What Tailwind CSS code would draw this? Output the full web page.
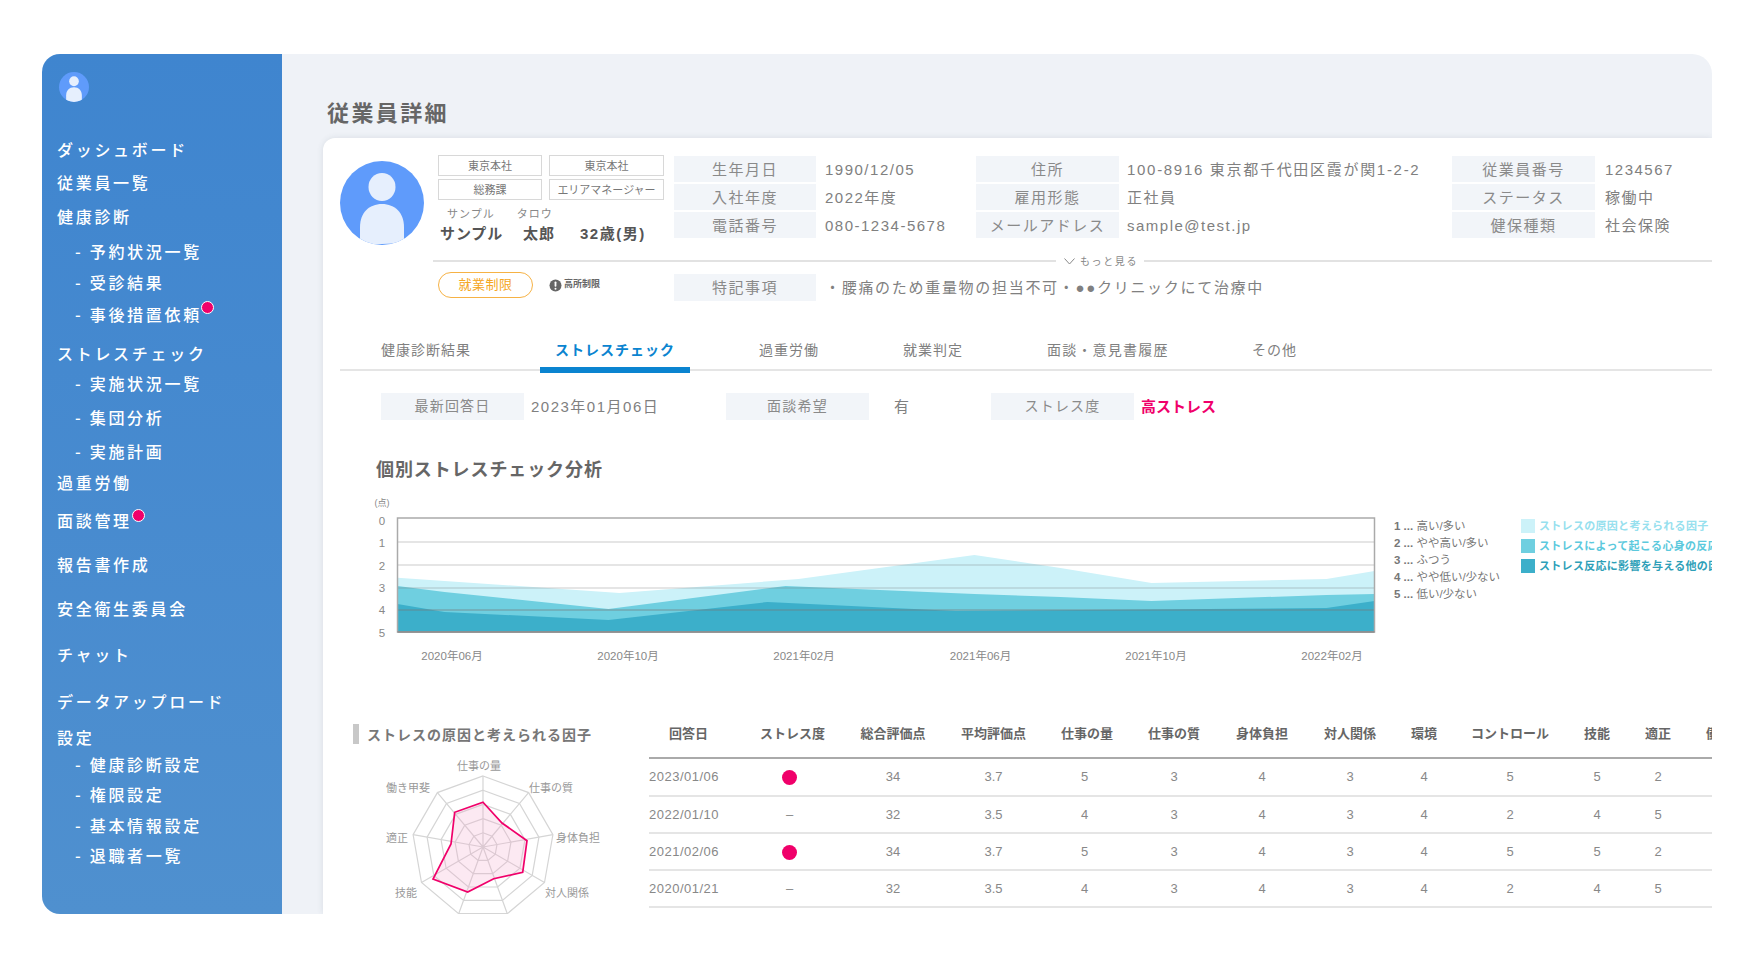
<!DOCTYPE html>
<html lang="ja">
<head>
<meta charset="utf-8">
<title>従業員詳細</title>
<script src="https://cdn.jsdelivr.net/npm/@tailwindcss/browser@4"></script>
</head>
<body class="bg-white overflow-hidden [font-family:'Liberation_Sans','Noto_Sans_CJK_JP',sans-serif]">
<div class="pt-[54px] pl-[42px] h-[964px] w-[1742px]">
  <div class="flex w-[1670px] h-[860px] overflow-hidden rounded-l-[18px] rounded-tr-[20px]">
    <!-- Sidebar -->
    <aside class="w-[240px] shrink-0 bg-gradient-to-b from-[#3f85cf] to-[#4f90cf] pt-[18px] pl-[15px] text-white font-medium text-[16px] leading-[20px] tracking-[2.7px] [font-family:'Noto_Sans_CJK_JP',sans-serif]">
      <svg class="ml-[2px] w-[30px] h-[30px]" viewBox="0 0 84 84">
        <defs><clipPath id="a1"><circle cx="42" cy="42" r="42"/></clipPath></defs>
        <circle cx="42" cy="42" r="42" fill="#5f9bfb"/>
        <g clip-path="url(#a1)" fill="#e6effd"><ellipse cx="42" cy="26" rx="13.5" ry="14"/><path d="M20 84V66C20 52 29 43 42 43C55 43 64 52 64 66V84Z"/></g>
      </svg>
      <nav class="mt-[37px]">
        <div>ダッシュボード</div>
        <div class="mt-[13px]">従業員一覧</div>
        <div class="mt-[14px]">健康診断</div>
        <div class="mt-[15px] ml-[18px]">- 予約状況一覧</div>
        <div class="mt-[11px] ml-[18px]">- 受診結果</div>
        <div class="mt-[12px] ml-[18px]"><span class="relative">- 事後措置依頼<i class="absolute left-full top-[-1px] ml-[-1px] w-[13px] h-[13px] rounded-full bg-[#f0006a] border border-white"></i></span></div>
        <div class="mt-[19px]">ストレスチェック</div>
        <div class="mt-[10px] ml-[18px]">- 実施状況一覧</div>
        <div class="mt-[14px] ml-[18px]">- 集団分析</div>
        <div class="mt-[14px] ml-[18px]">- 実施計画</div>
        <div class="mt-[11px]">過重労働</div>
        <div class="mt-[18px]"><span class="relative">面談管理<i class="absolute left-full top-[1px] w-[13px] h-[13px] rounded-full bg-[#f0006a] border border-white"></i></span></div>
        <div class="mt-[24px]">報告書作成</div>
        <div class="mt-[24px]">安全衛生委員会</div>
        <div class="mt-[26px]">チャット</div>
        <div class="mt-[27px]">データアップロード</div>
        <div class="mt-[16px]">設定</div>
        <div class="mt-[7px] ml-[18px]">- 健康診断設定</div>
        <div class="mt-[10px] ml-[18px]">- 権限設定</div>
        <div class="mt-[11px] ml-[18px]">- 基本情報設定</div>
        <div class="mt-[10px] ml-[18px]">- 退職者一覧</div>
      </nav>
    </aside>

    <!-- Main -->
    <main class="flex-1 min-w-0 flex flex-col bg-[#eff2f7] pl-[41px] pt-[42px]">
      <h1 class="ml-[4px] h-[30px] leading-[30px] text-[22px] tracking-[2.4px] font-bold text-[#666] [font-family:'Noto_Sans_CJK_JP',sans-serif]">従業員詳細</h1>
      <section class="mt-[12px] flex-1 min-h-0 overflow-hidden bg-white rounded-tl-[12px] shadow-[0_0_6px_rgba(60,70,90,0.12)]">
        <!-- Profile header -->
        <div class="flex pl-[17px] pt-[17px]">
          <svg class="mt-[6px] w-[84px] h-[84px] shrink-0" viewBox="0 0 84 84">
            <defs><clipPath id="a2"><circle cx="42" cy="42" r="42"/></clipPath></defs>
            <circle cx="42" cy="42" r="42" fill="#5f9bfb"/>
            <g clip-path="url(#a2)" fill="#e6effd"><ellipse cx="42" cy="26" rx="13.5" ry="14"/><path d="M20 84V66C20 52 29 43 42 43C55 43 64 52 64 66V82Z"/></g>
          </svg>
          <div class="ml-[14px] w-[226px] shrink-0">
            <div class="grid grid-cols-[104px_115px] gap-x-[7px] gap-y-[3px] text-[11px] text-[#777] text-center">
              <div class="h-[21px] leading-[20px] border border-[#d8d8d8]">東京本社</div>
              <div class="h-[21px] leading-[20px] border border-[#d8d8d8]">東京本社</div>
              <div class="h-[21px] leading-[20px] border border-[#d8d8d8]">総務課</div>
              <div class="h-[21px] leading-[20px] border border-[#d8d8d8]">エリアマネージャー</div>
            </div>
            <div class="mt-[7px] ml-[9px] h-[14px] leading-[14px] text-[11px] tracking-[1px] text-[#888]"><span>サンプル</span><span class="ml-[22px]">タロウ</span></div>
            <div class="mt-[2px] ml-[2px] h-[22px] leading-[22px] text-[15px] font-bold tracking-[0.9px] text-[#555] flex"><span class="w-[83px]">サンプル</span><span class="w-[57px]">太郎</span><span class="tracking-[1.5px]">32歳(男)</span></div>
          </div>
          <div class="ml-[10px] mt-[1px] flex-1 grid grid-cols-[142px_160px_143px_333px_143px_1fr] auto-rows-[26px] gap-y-[2px] text-[15px] leading-[27px] tracking-[1.5px] text-[#808080]">
            <div class="bg-[#f2f5f9] text-center text-[#8a8a8a]">生年月日</div><div class="pl-[9px]">1990/12/05</div>
            <div class="bg-[#f2f5f9] text-center text-[#8a8a8a]">住所</div><div class="pl-[8px] whitespace-nowrap tracking-[1.7px]">100-8916 東京都千代田区霞が関1-2-2</div>
            <div class="bg-[#f2f5f9] text-center text-[#8a8a8a]">従業員番号</div><div class="pl-[10px]">1234567</div>
            <div class="bg-[#f2f5f9] text-center text-[#8a8a8a]">入社年度</div><div class="pl-[9px]">2022年度</div>
            <div class="bg-[#f2f5f9] text-center text-[#8a8a8a]">雇用形態</div><div class="pl-[8px]">正社員</div>
            <div class="bg-[#f2f5f9] text-center text-[#8a8a8a]">ステータス</div><div class="pl-[10px]">稼働中</div>
            <div class="bg-[#f2f5f9] text-center text-[#8a8a8a]">電話番号</div><div class="pl-[9px]">080-1234-5678</div>
            <div class="bg-[#f2f5f9] text-center text-[#8a8a8a]">メールアドレス</div><div class="pl-[8px]">sample@test.jp</div>
            <div class="bg-[#f2f5f9] text-center text-[#8a8a8a]">健保種類</div><div class="pl-[10px]">社会保険</div>
          </div>
        </div>

        <!-- More divider -->
        <div class="mt-[9px] ml-[110px] flex items-center h-[14px]">
          <div class="w-[623px] h-[2px] bg-[#e2e2e2]"></div>
          <svg class="ml-[8px] w-[11px] h-[7px]" viewBox="0 0 11 7"><polyline points="0.5,0.5 5.5,6 10.5,0.5" fill="none" stroke="#888" stroke-width="1"/></svg>
          <span class="ml-[5px] text-[10px] tracking-[1.6px] text-[#888] whitespace-nowrap">もっと見る</span>
          <div class="ml-[6px] flex-1 h-[2px] bg-[#e2e2e2]"></div>
        </div>

        <!-- Restriction and notes -->
        <div class="mt-[4px] ml-[115px] flex items-start">
          <div class="w-[236px] shrink-0 flex items-center">
            <span class="w-[95px] h-[26px] leading-[24px] text-center rounded-full border border-[#f6b245] text-[13px] tracking-[0.5px] text-[#f5a623]">就業制限</span>
            <svg class="ml-[16px] w-[13px] h-[13px]" viewBox="0 0 13 13"><circle cx="6.5" cy="6.5" r="6" fill="#666"/><rect x="5.6" y="2.4" width="1.8" height="5.4" rx="0.8" fill="#fff"/><circle cx="6.5" cy="9.8" r="1" fill="#fff"/></svg>
            <span class="ml-[2px] text-[9px] font-bold text-[#666] whitespace-nowrap">高所制限</span>
          </div>
          <div class="mt-[2px] w-[142px] h-[27px] leading-[27px] bg-[#f2f5f9] text-center text-[15px] tracking-[1.5px] text-[#8a8a8a]">特記事項</div>
          <div class="ml-[9px] mt-[2px] leading-[27px] text-[15px] tracking-[1.7px] text-[#808080]">・腰痛のため重量物の担当不可・●●クリニックにて治療中</div>
        </div>

        <!-- Tabs -->
        <div class="mt-[34px] ml-[17px] h-[36px] flex items-start border-b-2 border-[#e5e5e5] text-[14px] tracking-[1px] leading-[30px] text-[#808080]">
          <span class="ml-[41px] w-[90px] whitespace-nowrap">健康診断結果</span>
          <span class="ml-[69px] w-[150px] h-[38px] text-center font-bold text-[#0a84d0] border-b-[6px] border-[#0a84d0] whitespace-nowrap">ストレスチェック</span>
          <span class="ml-[69px] w-[60px] whitespace-nowrap">過重労働</span>
          <span class="ml-[84px] w-[60px] whitespace-nowrap">就業判定</span>
          <span class="ml-[84px] w-[122px] whitespace-nowrap tracking-[1.2px]">面談・意見書履歴</span>
          <span class="ml-[83px] whitespace-nowrap">その他</span>
        </div>

        <!-- Stress summary -->
        <div class="mt-[22px] pl-[58px] grid grid-cols-[143px_202px_143px_122px_143px_1fr] h-[27px] leading-[27px] text-[15px] tracking-[1.5px] text-[#808080]">
          <div class="bg-[#f2f5f9] text-center text-[14px] tracking-[1.2px] text-[#8a8a8a]">最新回答日</div><div class="pl-[7px]">2023年01月06日</div>
          <div class="bg-[#f2f5f9] text-center text-[14px] tracking-[1.2px] text-[#8a8a8a]">面談希望</div><div class="pl-[25px]">有</div>
          <div class="bg-[#f2f5f9] text-center text-[14px] tracking-[1.2px] text-[#8a8a8a]">ストレス度</div><div class="pl-[7px] font-bold tracking-normal text-[#f0006a]">高ストレス</div>
        </div>

        <h2 class="mt-[35px] ml-[53px] h-[26px] leading-[26px] text-[18px] tracking-[0.9px] font-bold text-[#666] [font-family:'Noto_Sans_CJK_JP',sans-serif]">個別ストレスチェック分析</h2>

        <!-- Chart and legends -->
        <div class="mt-[16px] flex h-[170px]">
          <svg class="w-[1065px] h-[170px] shrink-0" viewBox="0 0 1065 170" font-size="11.5" fill="#888">
            <text x="59" y="9" font-size="9" text-anchor="middle">(点)</text>
            <g text-anchor="middle">
              <text x="59" y="28">0</text><text x="59" y="50">1</text><text x="59" y="73">2</text><text x="59" y="95">3</text><text x="59" y="117">4</text><text x="59" y="140">5</text>
              <text x="129" y="163">2020年06月</text><text x="305" y="163">2020年10月</text><text x="481" y="163">2021年02月</text><text x="657.5" y="163">2021年06月</text><text x="833" y="163">2021年10月</text><text x="1009" y="163">2022年02月</text>
            </g>
            <g transform="translate(74.5 21)">
              <polygon points="0,59.7 47,63 222,75 401,61 577,37 663,50 754,65 929,61 977,53 977,114 0,114" fill="#ccf2f9"/>
              <polygon points="0,68 47,74 211,91 388,68 577,76 663,79 754,83 929,77 977,76 977,114 0,114" fill="#6fcfe0"/>
              <polygon points="0,86 47,94 211,102 370,84 558,93 929,90 977,83 977,114 0,114" fill="#3cafca"/>
              <g stroke="#777" stroke-opacity="0.25" stroke-width="1.5">
                <line x1="0" x2="977" y1="24" y2="24"/><line x1="0" x2="977" y1="47" y2="47"/><line x1="0" x2="977" y1="70" y2="70"/><line x1="0" x2="977" y1="92" y2="92" stroke-opacity="0.45"/>
              </g>
              <rect x="0" y="0" width="977" height="114" fill="none" stroke="#aaa" stroke-width="1.5"/>
              <line x1="0" x2="977" y1="114" y2="114" stroke="#888" stroke-width="1.5"/>
            </g>
          </svg>
          <div class="ml-[6px] w-[127px] shrink-0 pt-[21px] text-[11.5px] leading-[17px] text-[#777] whitespace-nowrap">
            <div><b>1 ...</b> 高い/多い</div>
            <div><b>2 ...</b> やや高い/多い</div>
            <div><b>3 ...</b> ふつう</div>
            <div><b>4 ...</b> やや低い/少ない</div>
            <div><b>5 ...</b> 低い/少ない</div>
          </div>
          <div class="pt-[22px] flex flex-col gap-y-[6px] text-[11px] leading-[14px] tracking-[0.3px] font-bold whitespace-nowrap">
            <div class="flex items-center text-[#97e0ee]"><i class="w-[14px] h-[14px] bg-[#ccf2f9] mr-[4px]"></i>ストレスの原因と考えられる因子</div>
            <div class="flex items-center text-[#5cc9dd]"><i class="w-[14px] h-[14px] bg-[#6fcfe0] mr-[4px]"></i>ストレスによって起こる心身の反応</div>
            <div class="flex items-center text-[#2e9fb8]"><i class="w-[14px] h-[14px] bg-[#3cafca] mr-[4px]"></i>ストレス反応に影響を与える他の因子</div>
          </div>
        </div>

        <!-- Radar and table -->
        <div class="mt-[47px] flex items-start">
          <div class="w-[326px] shrink-0 pl-[30px] pt-[10px]">
            <div class="flex items-center h-[20px]">
              <i class="w-[6px] h-[20px] bg-[#c8c8c8]"></i>
              <span class="ml-[8px] text-[14px] tracking-[1px] font-bold text-[#777] whitespace-nowrap [font-family:'Noto_Sans_CJK_JP',sans-serif]">ストレスの原因と考えられる因子</span>
            </div>
            <svg class="mt-[2px] w-[295px] h-[190px]" viewBox="0 0 295 190" font-size="11" fill="#999" text-anchor="middle">
              <text x="126" y="24">仕事の量</text><text x="55" y="46">働き甲斐</text><text x="198" y="46">仕事の質</text><text x="44" y="96">適正</text><text x="225" y="96">身体負担</text><text x="53" y="151">技能</text><text x="214" y="151">対人関係</text>
              <g transform="translate(130 101)">
                <g fill="none" stroke="#d5d5d5" stroke-width="1.2">
                  <polygon vector-effect="non-scaling-stroke" transform="scale(0.2)" points="0,-71 45.6,-54.4 69.9,-12.3 61.5,35.5 24.3,66.7 -24.3,66.7 -61.5,35.5 -69.9,-12.3 -45.6,-54.4"/>
                  <polygon vector-effect="non-scaling-stroke" transform="scale(0.4)" points="0,-71 45.6,-54.4 69.9,-12.3 61.5,35.5 24.3,66.7 -24.3,66.7 -61.5,35.5 -69.9,-12.3 -45.6,-54.4"/>
                  <polygon vector-effect="non-scaling-stroke" transform="scale(0.6)" points="0,-71 45.6,-54.4 69.9,-12.3 61.5,35.5 24.3,66.7 -24.3,66.7 -61.5,35.5 -69.9,-12.3 -45.6,-54.4"/>
                  <polygon vector-effect="non-scaling-stroke" transform="scale(0.8)" points="0,-71 45.6,-54.4 69.9,-12.3 61.5,35.5 24.3,66.7 -24.3,66.7 -61.5,35.5 -69.9,-12.3 -45.6,-54.4"/>
                  <polygon points="0,-71 45.6,-54.4 69.9,-12.3 61.5,35.5 24.3,66.7 -24.3,66.7 -61.5,35.5 -69.9,-12.3 -45.6,-54.4"/>
                  <path d="M0 0L0 -71M0 0L45.6 -54.4M0 0L69.9 -12.3M0 0L61.5 35.5M0 0L24.3 66.7M0 0L-24.3 66.7M0 0L-61.5 35.5M0 0L-69.9 -12.3M0 0L-45.6 -54.4"/>
                </g>
                <polygon points="0,-44.7 19,-24 44,-6.3 39.7,25.3 10.7,31.7 -15.3,45 -50,32 -32,-3 -28.3,-34.7" fill="#f5a8cc" fill-opacity="0.25" stroke="#f0006a" stroke-width="1.7"/>
              </g>
            </svg>
          </div>
          <table class="table-fixed w-[1113px] shrink-0 border-separate border-spacing-0 text-[13px] text-center text-[#888]">
            <colgroup>
              <col class="w-[79px]"><col class="w-[129px]"><col class="w-[72px]"><col class="w-[129px]"><col class="w-[58px]"><col class="w-[116px]"><col class="w-[60px]"><col class="w-[116px]"><col class="w-[32px]"><col class="w-[140px]"><col class="w-[34px]"><col class="w-[88px]"><col class="w-[60px]">
            </colgroup>
            <thead class="text-[#666]">
              <tr class="h-[45px]">
                <th class="font-bold pb-[3px] border-b-2 border-[#aaa] whitespace-nowrap">回答日</th><th class="font-bold pb-[3px] border-b-2 border-[#aaa] whitespace-nowrap">ストレス度</th><th class="font-bold pb-[3px] border-b-2 border-[#aaa] whitespace-nowrap">総合評価点</th><th class="font-bold pb-[3px] border-b-2 border-[#aaa] whitespace-nowrap">平均評価点</th><th class="font-bold pb-[3px] border-b-2 border-[#aaa] whitespace-nowrap">仕事の量</th><th class="font-bold pb-[3px] border-b-2 border-[#aaa] whitespace-nowrap">仕事の質</th><th class="font-bold pb-[3px] border-b-2 border-[#aaa] whitespace-nowrap">身体負担</th><th class="font-bold pb-[3px] border-b-2 border-[#aaa] whitespace-nowrap">対人関係</th><th class="font-bold pb-[3px] border-b-2 border-[#aaa] whitespace-nowrap">環境</th><th class="font-bold pb-[3px] border-b-2 border-[#aaa] whitespace-nowrap">コントロール</th><th class="font-bold pb-[3px] border-b-2 border-[#aaa] whitespace-nowrap">技能</th><th class="font-bold pb-[3px] border-b-2 border-[#aaa] whitespace-nowrap">適正</th><th class="font-bold pb-[3px] border-b-2 border-[#aaa] whitespace-nowrap">働き甲斐</th>
              </tr>
            </thead>
            <tbody class="[&_td]:border-b-2 [&_td]:border-[#e5e5e5]">
              <tr class="h-[38px]"><td class="text-left tracking-[0.5px] whitespace-nowrap">2023/01/06</td><td class="pr-[6px]"><i class="inline-block align-middle w-[15px] h-[15px] rounded-full bg-[#f0006a]"></i></td><td>34</td><td>3.7</td><td class="pr-[5px]">5</td><td>3</td><td>4</td><td>3</td><td>4</td><td>5</td><td>5</td><td>2</td><td></td></tr>
              <tr class="h-[37px]"><td class="text-left tracking-[0.5px] whitespace-nowrap">2022/01/10</td><td class="pr-[6px]">–</td><td>32</td><td>3.5</td><td class="pr-[5px]">4</td><td>3</td><td>4</td><td>3</td><td>4</td><td>2</td><td>4</td><td>5</td><td></td></tr>
              <tr class="h-[37px]"><td class="text-left tracking-[0.5px] whitespace-nowrap">2021/02/06</td><td class="pr-[6px]"><i class="inline-block align-middle w-[15px] h-[15px] rounded-full bg-[#f0006a]"></i></td><td>34</td><td>3.7</td><td class="pr-[5px]">5</td><td>3</td><td>4</td><td>3</td><td>4</td><td>5</td><td>5</td><td>2</td><td></td></tr>
              <tr class="h-[37px]"><td class="text-left tracking-[0.5px] whitespace-nowrap">2020/01/21</td><td class="pr-[6px]">–</td><td>32</td><td>3.5</td><td class="pr-[5px]">4</td><td>3</td><td>4</td><td>3</td><td>4</td><td>2</td><td>4</td><td>5</td><td></td></tr>
            </tbody>
          </table>
        </div>
      </section>
    </main>
  </div>
</div>
</body>
</html>
